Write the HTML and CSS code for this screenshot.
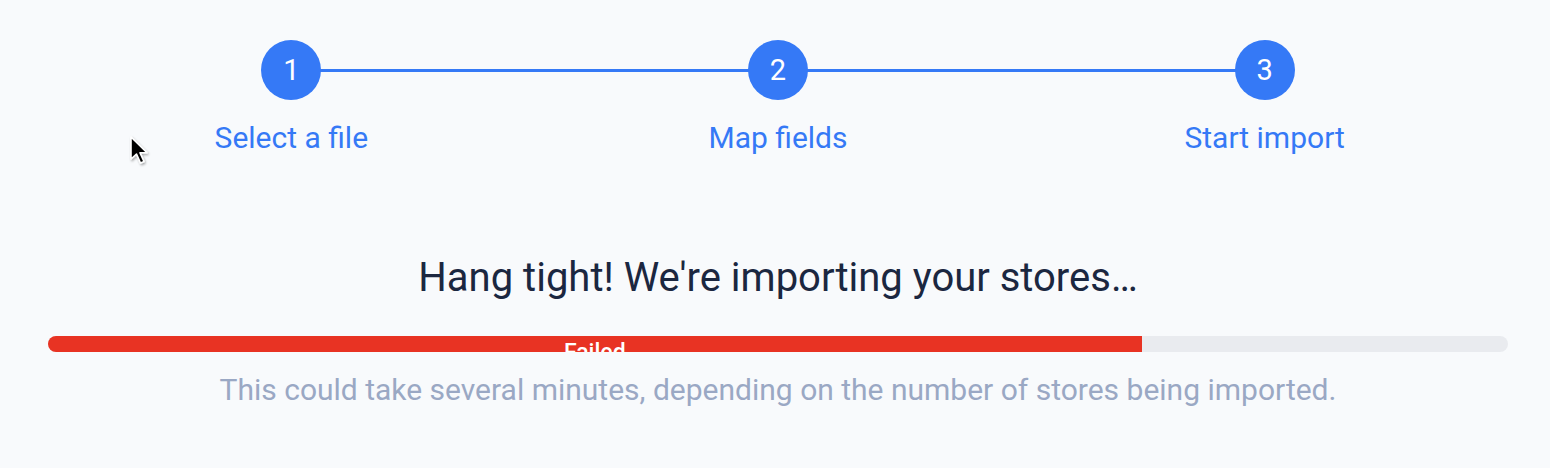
FILE: index.html
```html
<!DOCTYPE html>
<html>
<head>
<meta charset="utf-8">
<link rel="stylesheet" href="styles.css">
</head>
<body>
<div class="page">
  <div class="steps">
    <div class="step step-first">
      <div class="circle">1</div>
      <div class="label">Select a file</div>
    </div>
    <div class="step step-mid">
      <div class="circle">2</div>
      <div class="label">Map fields</div>
    </div>
    <div class="step step-last">
      <div class="circle">3</div>
      <div class="label">Start import</div>
    </div>
  </div>
  <h1 class="title">Hang tight! We're importing your stores…</h1>
  <div class="track">
    <div class="fill" style="width: 74.9%"><span class="fill-text">Failed</span></div>
  </div>
  <p class="note">This could take several minutes, depending on the number of stores being imported.</p>
</div>
<svg class="cursor" width="26" height="36" viewBox="0 0 26 36">
  <defs>
    <filter id="sh" x="-30%" y="-30%" width="160%" height="160%">
      <feDropShadow dx="1" dy="1.5" stdDeviation="1.2" flood-color="#000" flood-opacity="0.35"/>
    </filter>
  </defs>
  <path d="M2 2 L2 24 L7.5 19 L11.5 28 L15 26.5 L11 17.8 L18 17.8 Z" fill="#000" stroke="#fff" stroke-width="1.6" stroke-linejoin="round" filter="url(#sh)"/>
</svg>
</body>
</html>
```
FILE: styles.css
```css
html, body {
  margin: 0;
  padding: 0;
  background: #f8fafc;
}
body {
  font-family: Roboto, "Liberation Sans", sans-serif;
  width: 1550px;
  height: 468px;
  overflow: hidden;
  position: relative;
}
.page {
  padding: 40px 42px 0 48px;
}
.steps {
  display: grid;
  grid-template-columns: repeat(3, 1fr);
}
.step {
  position: relative;
  display: flex;
  flex-direction: column;
  align-items: center;
}
.step::before,
.step::after {
  content: "";
  position: absolute;
  top: 29px;
  height: 3px;
  background: #3579f6;
}
.step-first::after { left: 50%; right: 0; }
.step-mid::before { left: 0; right: 50%; }
.step-mid::after { left: 50%; right: 0; }
.step-last::before { left: 0; right: 50%; }
.circle {
  position: relative;
  z-index: 1;
  width: 60px;
  height: 60px;
  border-radius: 50%;
  background: #3579f6;
  color: #fff;
  font-size: 29px;
  line-height: 60px;
  text-align: center;
}
.label {
  margin-top: 20px;
  color: #3579f6;
  font-size: 30px;
  line-height: 36px;
}
.title {
  margin: 98px 0 0;
  text-align: center;
  font-weight: 400;
  font-size: 40px;
  line-height: 48px;
  color: #1b2740;
}
.track {
  margin-top: 34px;
  height: 16px;
  border-radius: 8px;
  background: #e9ebef;
  overflow: hidden;
}
.fill {
  height: 16px;
  background: #e83323;
  text-align: center;
  overflow: hidden;
}
.fill-text {
  display: block;
  color: #fff;
  font-size: 23px;
  font-weight: 500;
  line-height: 23px;
  padding-top: 5px;
}
.note {
  margin: 20px 0 0;
  text-align: center;
  font-size: 30px;
  line-height: 36px;
  color: #9aa8c4;
}
.cursor {
  position: absolute;
  left: 129px;
  top: 135px;
}
```
